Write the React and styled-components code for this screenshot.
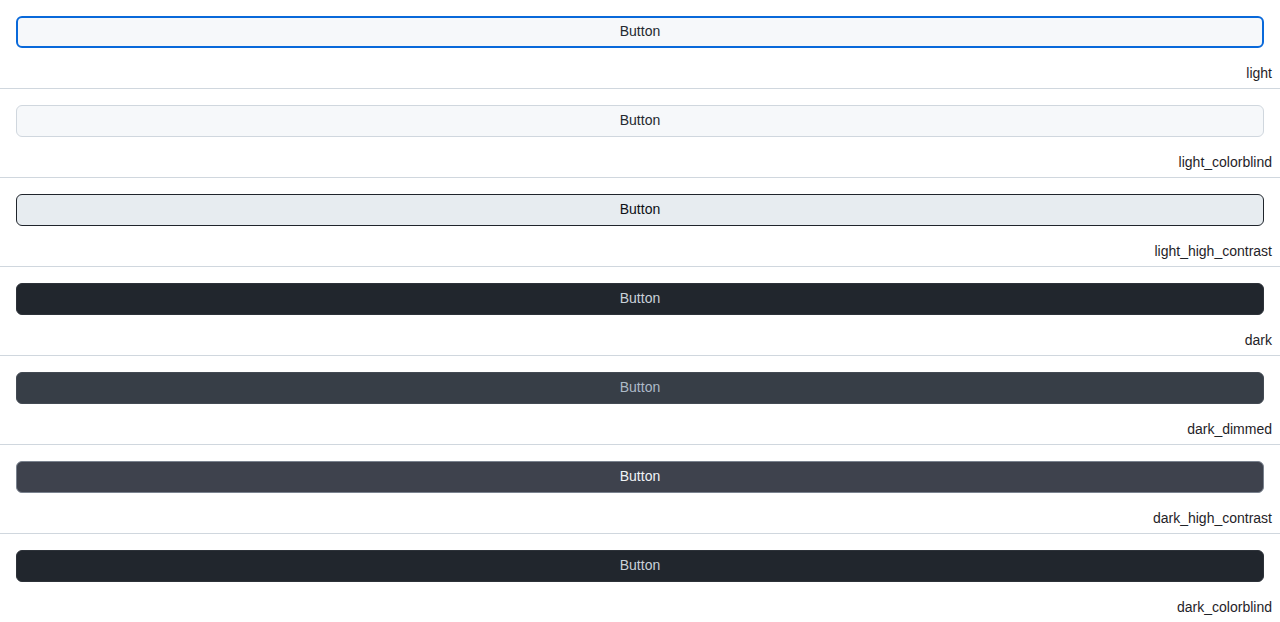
import styled, { createGlobalStyle } from "styled-components";

const Global = createGlobalStyle`
  body {
    margin: 0;
    background: #ffffff;
    font-family: "Liberation Sans", Arial, sans-serif;
  }
`;

const themes = [
  {
    name: "light",
    bg: "#f6f8fa",
    color: "#24292f",
    border: "#0969da",
    width: 2,
  },
  {
    name: "light_colorblind",
    bg: "#f6f8fa",
    color: "#24292f",
    border: "#d0d7de",
    width: 1,
  },
  {
    name: "light_high_contrast",
    bg: "#e7ecf0",
    color: "#0e1116",
    border: "#20252c",
    width: 1,
  },
  {
    name: "dark",
    bg: "#21262d",
    color: "#c9d1d9",
    border: "#2d3239",
    width: 1,
  },
  {
    name: "dark_dimmed",
    bg: "#373e47",
    color: "#adbac7",
    border: "#434a53",
    width: 1,
  },
  {
    name: "dark_high_contrast",
    bg: "#3e424d",
    color: "#f0f3f6",
    border: "#7a828e",
    width: 1,
  },
  {
    name: "dark_colorblind",
    bg: "#21262d",
    color: "#c9d1d9",
    border: "#2d3239",
    width: 1,
  },
];

const Section = styled.section`
  border-bottom: 1px solid #d0d7de;
  &:last-child {
    border-bottom: none;
  }
`;

const ButtonRow = styled.div`
  padding: 16px;
`;

const ThemedButton = styled.button`
  display: block;
  width: 100%;
  height: 32px;
  box-sizing: border-box;
  border-radius: 6px;
  border: ${(p) => p.$width}px solid ${(p) => p.$border};
  background: ${(p) => p.$bg};
  color: ${(p) => p.$color};
  font-family: "Liberation Sans", Arial, sans-serif;
  font-size: 14px;
  line-height: 20px;
  padding: 0 16px 2px;
  cursor: pointer;
  outline: none;
`;

const Label = styled.div`
  text-align: right;
  padding: 0 8px 6px;
  font-size: 14px;
  line-height: 18px;
  color: #1f2328;
`;

export default function App() {
  return (
    <>
      <Global />
      {themes.map((t) => (
        <Section key={t.name}>
          <ButtonRow>
            <ThemedButton
              $bg={t.bg}
              $color={t.color}
              $border={t.border}
              $width={t.width}
            >
              Button
            </ThemedButton>
          </ButtonRow>
          <Label>{t.name}</Label>
        </Section>
      ))}
    </>
  );
}
